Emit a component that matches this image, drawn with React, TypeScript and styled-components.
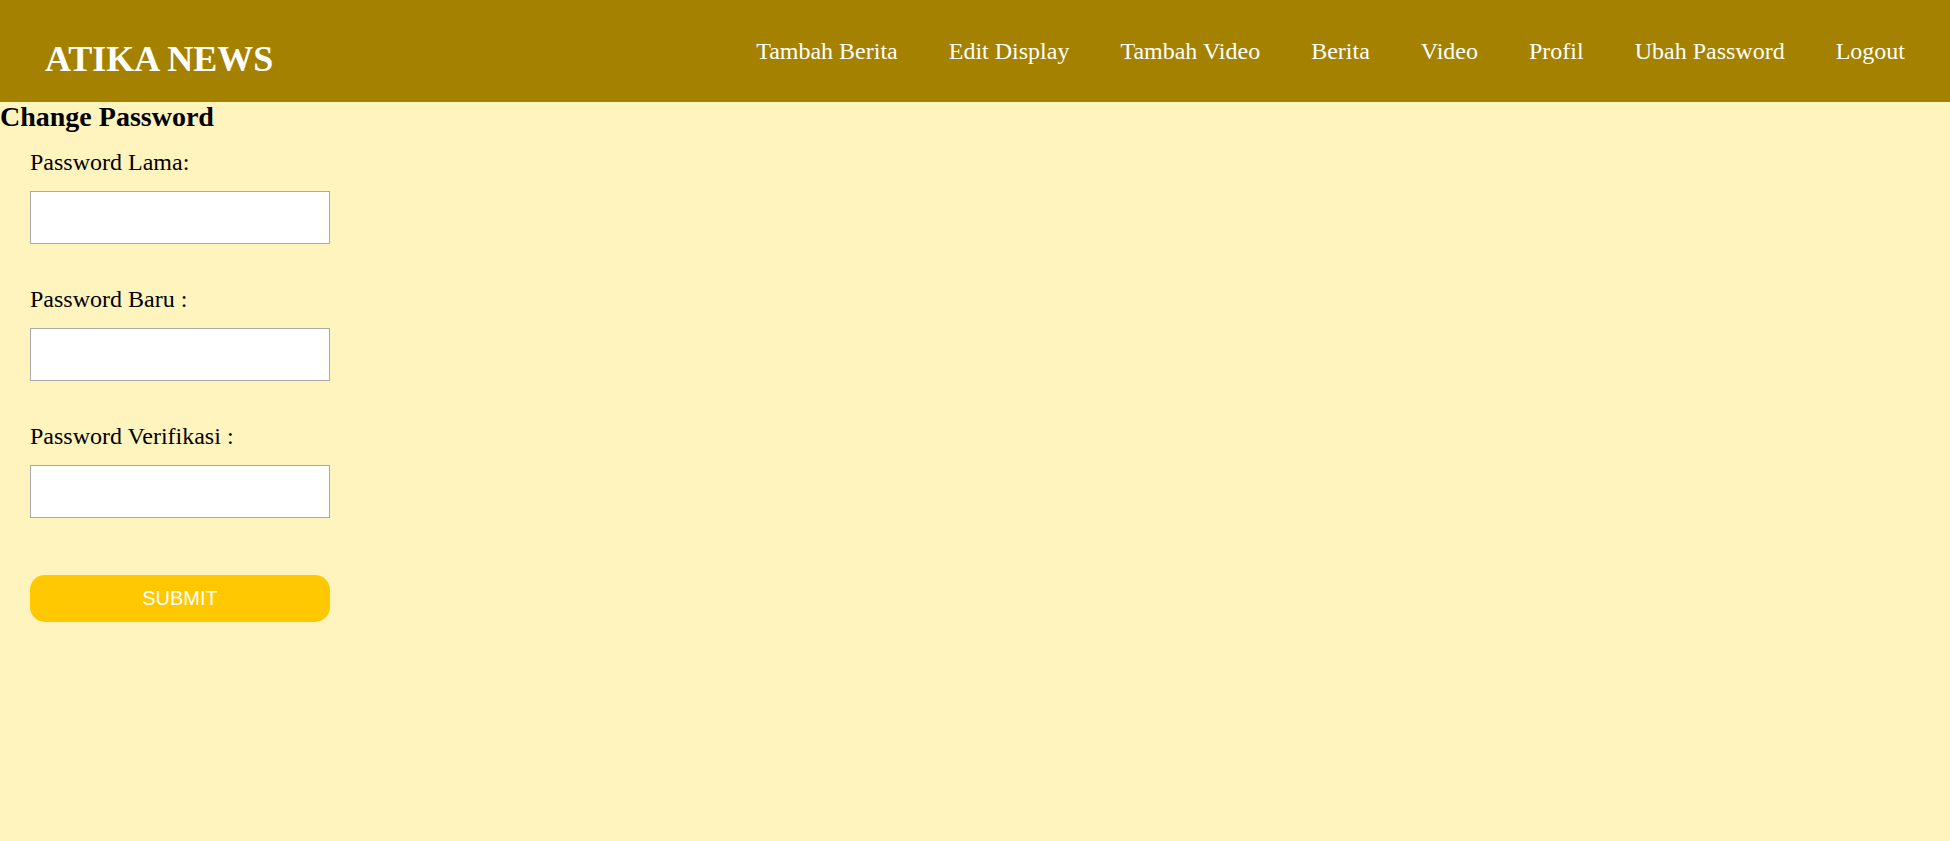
import React from "react";
import styled, { createGlobalStyle } from "styled-components";

const GlobalStyle = createGlobalStyle`
  html, body {
    margin: 0;
    padding: 0;
    background: #fff4be;
    min-height: 100vh;
  }
  body {
    font-family: "Liberation Serif", "Times New Roman", serif;
    color: #000;
  }
  * { box-sizing: border-box; }
`;

const Header = styled.header`
  display: flex;
  align-items: flex-start;
  justify-content: space-between;
  height: 102px;
  background: #a58100;
  padding: 0 45px;
`;

const Logo = styled.h1`
  margin: 41px 0 0;
  font-family: "Liberation Serif", "Times New Roman", serif;
  font-size: 36px;
  line-height: 36px;
  font-weight: bold;
  color: #fff;
`;

const Nav = styled.nav`
  display: flex;
  gap: 51px;
  margin-top: 39px;
`;

const NavLink = styled.a`
  font-family: "Liberation Serif", "Times New Roman", serif;
  font-size: 24px;
  line-height: 24px;
  color: #fff;
  text-decoration: none;
  white-space: nowrap;
  cursor: pointer;
`;

const Title = styled.h2`
  margin: 0;
  font-family: "Liberation Serif", "Times New Roman", serif;
  font-size: 28px;
  line-height: 29px;
  font-weight: bold;
`;

const Form = styled.form`
  display: flex;
  flex-direction: column;
  align-items: flex-start;
  padding: 17px 0 0 30px;
`;

const FieldGroup = styled.div<{ $last?: boolean }>`
  display: flex;
  flex-direction: column;
  margin-bottom: ${(p) => (p.$last ? "0" : "41px")};
`;

const Label = styled.label`
  font-family: "Liberation Serif", "Times New Roman", serif;
  font-size: 24px;
  line-height: 28px;
  margin-bottom: 15px;
`;

const Input = styled.input`
  width: 300px;
  height: 53px;
  border: 1px solid #a9a9a9;
  background: #fff;
  padding: 0 8px;
  font-size: 20px;
  outline: none;
`;

const SubmitButton = styled.button`
  margin-top: 57px;
  width: 300px;
  height: 47px;
  border: none;
  border-radius: 15px;
  background: #ffc800;
  color: #fff;
  font-family: "Liberation Sans", Arial, sans-serif;
  font-size: 20px;
  cursor: pointer;
`;

const navItems = [
  "Tambah Berita",
  "Edit Display",
  "Tambah Video",
  "Berita",
  "Video",
  "Profil",
  "Ubah Password",
  "Logout",
];

const fields = [
  { id: "old", label: "Password Lama:" },
  { id: "new", label: "Password Baru :" },
  { id: "verify", label: "Password Verifikasi :" },
];

export default function App() {
  return (
    <>
      <GlobalStyle />
      <Header>
        <Logo>ATIKA NEWS</Logo>
        <Nav>
          {navItems.map((item) => (
            <NavLink key={item}>{item}</NavLink>
          ))}
        </Nav>
      </Header>
      <Title>Change Password</Title>
      <Form onSubmit={(e) => e.preventDefault()}>
        {fields.map((f, i) => (
          <FieldGroup key={f.id} $last={i === fields.length - 1}>
            <Label htmlFor={f.id}>{f.label}</Label>
            <Input id={f.id} type="password" />
          </FieldGroup>
        ))}
        <SubmitButton type="submit">SUBMIT</SubmitButton>
      </Form>
    </>
  );
}
